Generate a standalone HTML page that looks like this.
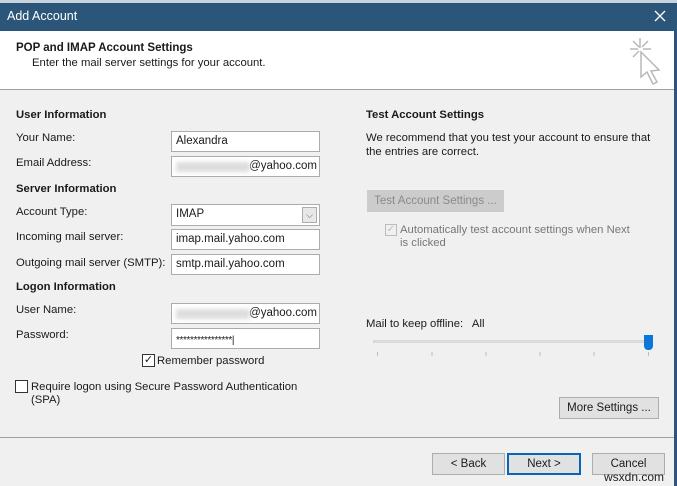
<!DOCTYPE html><html><head><style>
body{margin:0;width:677px;height:486px;overflow:hidden;background:#f0f0f0;font-family:"Liberation Sans",sans-serif;font-size:11.3px;color:#1a1a1a;position:relative}
div,span{position:absolute;box-sizing:border-box}
.t{white-space:nowrap;line-height:13px}
.b{font-weight:bold}
.in{left:171px;width:149px;height:21px;background:#fff;border:1px solid #acacac;padding:3px 4px;font-size:11.5px;line-height:13px}
.btn{height:22px;border:1px solid #adadad;background:#e1e1e1;text-align:center;line-height:20px;font-size:11.5px}
.blur{left:4px;top:5px;width:74px;height:10px;background:#ddd;filter:blur(2px)}
</style></head><body>
<div style="left:0;top:0;width:677px;height:3px;background:#c9d3dd"></div>
<div style="left:0;top:3px;width:677px;height:28px;background:#2b5679"></div>
<div class="t" style="left:7px;top:10px;color:#fff;font-size:12.5px">Add Account</div>
<svg style="position:absolute;left:654px;top:10px" width="12" height="12"><path d="M1 1L11 11M11 1L1 11" stroke="#fff" stroke-width="1.3"/></svg>
<div style="left:674px;top:31px;width:3px;height:455px;background:#2b5679"></div>
<div style="left:0;top:31px;width:674px;height:59px;background:#fff;border-bottom:1px solid #a0a0a0"></div>
<div class="t b" style="left:16px;top:42px;font-size:11.5px">POP and IMAP Account Settings</div>
<div class="t" style="left:32px;top:57px">Enter the mail server settings for your account.</div>
<svg style="position:absolute;left:626px;top:36px" width="40" height="52"><g stroke="#b8b8b8" stroke-width="1.5" fill="none"><path d="M14 2v10M4 13h8M17 13h8M7 5l6 6M22 5l-6 6M7 21l6-6"/><path d="M15 16l0 25 6-5 6 12 4-2-6-11 8-1z" fill="#fff"/></g></svg>
<div class="t b" style="left:16px;top:109px">User Information</div>
<div class="t" style="left:16px;top:132px">Your Name:</div>
<div class="in" style="top:131px">Alexandra</div>
<div class="t" style="left:16px;top:157px">Email Address:</div>
<div class="in" style="top:156px;text-align:right;padding-right:2px"><span class="blur"></span>@yahoo.com</div>
<div class="t b" style="left:16px;top:183px">Server Information</div>
<div class="t" style="left:16px;top:206px">Account Type:</div>
<div class="in" style="top:204px;height:22px">IMAP<span style="right:2px;top:2px;width:15px;height:16px;border:1px solid #acacac;background:#e8e8e8;font-size:9px;text-align:center;line-height:14px;color:#555">⌵</span></div>
<div class="t" style="left:16px;top:231px">Incoming mail server:</div>
<div class="in" style="top:229px">imap.mail.yahoo.com</div>
<div class="t" style="left:16px;top:257px">Outgoing mail server (SMTP):</div>
<div class="in" style="top:254px">smtp.mail.yahoo.com</div>
<div class="t b" style="left:16px;top:281px">Logon Information</div>
<div class="t" style="left:16px;top:304px">User Name:</div>
<div class="in" style="top:303px;text-align:right;padding-right:2px"><span class="blur"></span>@yahoo.com</div>
<div class="t" style="left:16px;top:329px">Password:</div>
<div class="in" style="top:328px;font-size:10px;letter-spacing:-0.4px;padding-top:5px">****************|</div>
<div style="left:142px;top:354px;width:13px;height:13px;border:1px solid #333;background:#fff;font-size:11px;line-height:11px;text-align:center">✓</div>
<div class="t" style="left:157px;top:355px">Remember password</div>
<div style="left:15px;top:380px;width:13px;height:13px;border:1px solid #333;background:#fff"></div>
<div class="t" style="left:31px;top:381px">Require logon using Secure Password Authentication</div>
<div class="t" style="left:31px;top:394px">(SPA)</div>
<div class="t b" style="left:366px;top:109px">Test Account Settings</div>
<div class="t" style="left:366px;top:132px">We recommend that you test your account to ensure that</div>
<div class="t" style="left:366px;top:146px">the entries are correct.</div>
<div class="btn" style="left:367px;top:190px;width:137px;color:#8a8a8a;border-color:#ccc;background:#ccc">Test Account Settings ...</div>
<div style="left:385px;top:224px;width:12px;height:12px;border:1px solid #bbb;color:#bbb;font-size:10px;line-height:10px;text-align:center">✓</div>
<div class="t" style="left:400px;top:224px;color:#777">Automatically test account settings when Next</div>
<div class="t" style="left:400px;top:237px;color:#777">is clicked</div>
<div class="t" style="left:366px;top:318px">Mail to keep offline:&nbsp;&nbsp; All</div>
<div style="left:373px;top:340px;width:278px;height:3px;background:#e0e0e0;border:1px solid #d6d6d6"></div>
<div style="left:644px;top:335px;width:9px;height:15px;background:#0a78d7;border-radius:0 0 4px 4px"></div>
<div style="left:377px;top:352px;width:272px;height:4px;border-left:1px solid #bbb;border-right:1px solid #bbb;background:linear-gradient(90deg,transparent 19.8%,#bbb 19.8%,#bbb 20.2%,transparent 20.2%,transparent 39.8%,#bbb 39.8%,#bbb 40.2%,transparent 40.2%,transparent 59.8%,#bbb 59.8%,#bbb 60.2%,transparent 60.2%,transparent 79.8%,#bbb 79.8%,#bbb 80.2%,transparent 80.2%)"></div>
<div class="btn" style="left:559px;top:397px;width:100px">More Settings ...</div>
<div style="left:0;top:437px;width:674px;height:1px;background:#a0a0a0"></div>
<div class="btn" style="left:432px;top:453px;width:73px">&lt; Back</div>
<div class="btn" style="left:507px;top:453px;width:74px;border:2px solid #0a64b4;line-height:18px">Next &gt;</div>
<div class="btn" style="left:592px;top:453px;width:73px">Cancel</div>
<div class="t" style="left:604px;top:471px;font-size:12px;color:#222">wsxdn.com</div>
</body></html>
